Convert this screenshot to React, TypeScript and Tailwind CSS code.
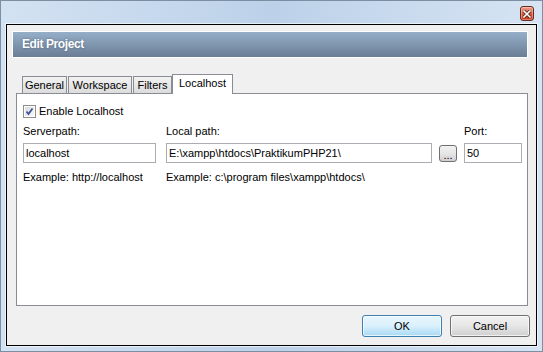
import React from 'react';

const tabs = [
  { label: 'General', width: 'w-[45px]' },
  { label: 'Workspace', width: 'w-[64px]' },
  { label: 'Filters', width: 'w-[39px]' },
];

function CloseButton() {
  return (
    <div className="w-[14px] h-[15px] rounded-[3px] border border-[#6b2a1b] bg-gradient-to-b from-[#eda18d] via-[#d6573a] to-[#c0361a] flex items-center justify-center shadow-[inset_0_0_0_1px_rgba(255,255,255,0.35)]">
      <svg width="8" height="8" viewBox="0 0 8 8">
        <path d="M1 1 L7 7 M7 1 L1 7" stroke="#3a1a10" strokeWidth="3" strokeLinecap="square" />
        <path d="M1 1 L7 7 M7 1 L1 7" stroke="#ffffff" strokeWidth="1.6" strokeLinecap="square" />
      </svg>
    </div>
  );
}

function Checkbox() {
  return (
    <div className="w-[13px] h-[13px] border border-[#8e8f8f] bg-white p-px">
      <div className="w-full h-full bg-gradient-to-br from-[#d9dadb] to-[#f9f9f9] flex items-center justify-center">
        <svg width="9" height="9" viewBox="0 0 9 9">
          <path d="M1.5 4.5 L3.5 7 L7.5 1.5" fill="none" stroke="#3d5595" strokeWidth="1.8" />
        </svg>
      </div>
    </div>
  );
}

function TextBox({ value, width }: { value: string; width: string }) {
  return (
    <div className={`${width} h-[20px] border border-[#abadb3] bg-white flex items-center pl-[2px] text-black`}>
      {value}
    </div>
  );
}

export default function App() {
  return (
    <div className="w-[543px] h-[352px] flex flex-col border border-[#7d8ea3] bg-gradient-to-r from-[#d3e2f2] via-[#bcd1e9] to-[#d6e4f3] font-['Liberation_Sans',sans-serif] text-[11px] leading-[13px] text-black">
      {/* Title bar */}
      <div className="h-[23px] flex justify-end pt-[5px] pr-[8px]">
        <CloseButton />
      </div>

      {/* Client area */}
      <div className="flex-1 mx-[5px] mb-[5px] border border-black bg-[#f0f0f0] shadow-[0_0_0_1px_rgba(255,255,255,0.6)] flex flex-col">
        <div className="mt-[6px] ml-[5px] w-[516px] h-[27px] border border-white bg-gradient-to-b from-[#96afc9] to-[#6a7e95] flex items-center pl-[9px]">
          <span className="text-white font-bold text-[12px] tracking-[-0.4px] [text-shadow:0_0_2px_rgba(40,60,90,0.6)]">
            Edit Project
          </span>
        </div>

        {/* Tabs */}
        <div className="mt-[16px] ml-[15px] h-[19px] flex items-end relative z-10">
          {tabs.map((t) => (
            <div
              key={t.label}
              className={`${t.width} h-[17px] mr-px border border-b-0 border-[#898c95] bg-gradient-to-b from-[#f2f2f2] to-[#dcdcdc] flex items-center justify-center pt-px`}
            >
              {t.label}
            </div>
          ))}
          <div className="w-[61px] h-[20px] -ml-px -mb-px border border-b-0 border-[#898c95] bg-white flex items-center justify-center pb-[2px]">
            Localhost
          </div>
        </div>

        {/* Tab panel */}
        <div className="ml-[9px] w-[512px] h-[213px] border border-[#898c95] bg-white pt-[10px] pl-[6px]">
          <div className="flex items-center h-[14px] gap-[3px]">
            <Checkbox />
            <span>Enable Localhost</span>
          </div>

          <div className="mt-px flex">
            <div className="flex flex-col">
              <span className="mt-[6px] h-[13px]">Serverpath:</span>
              <div className="mt-[5px]">
                <TextBox value="localhost" width="w-[133px]" />
              </div>
              <span className="mt-[8px]">Example: http://localhost</span>
            </div>
            <div className="flex flex-col ml-[10px]">
              <span className="mt-[6px] h-[13px]">Local path:</span>
              <div className="mt-[5px]">
                <TextBox value="E:\xampp\htdocs\PraktikumPHP21\" width="w-[266px]" />
              </div>
              <span className="mt-[8px]">Example: c:\program files\xampp\htdocs\</span>
            </div>
            <div className="ml-[7px] mt-[26px]">
              <div className="w-[18px] h-[17px] rounded-[3px] border border-[#707070] bg-gradient-to-b from-[#f2f2f2] via-[#e6e6e6] to-[#cfcfcf] flex items-end justify-center pb-[2px] leading-[8px]">
                ...
              </div>
            </div>
            <div className="flex flex-col ml-[7px]">
              <span className="mt-[6px] h-[13px]">Port:</span>
              <div className="mt-[5px]">
                <TextBox value="50" width="w-[58px]" />
              </div>
            </div>
          </div>
        </div>

        {/* Buttons */}
        <div className="mt-[9px] flex justify-end gap-[8px] pr-[6px]">
          <div className="w-[80px] h-[22px] rounded-[3px] border border-[#3c7fb1] bg-gradient-to-b from-[#eaf6fd] via-[#d9f0fc] to-[#a7d9f5] shadow-[inset_0_0_0_1px_rgba(255,255,255,0.7)] flex items-center justify-center">
            OK
          </div>
          <div className="w-[80px] h-[22px] rounded-[3px] border border-[#707070] bg-gradient-to-b from-[#f2f2f2] via-[#e6e6e6] to-[#cfcfcf] shadow-[inset_0_0_0_1px_rgba(255,255,255,0.7)] flex items-center justify-center">
            Cancel
          </div>
        </div>
      </div>
    </div>
  );
}
